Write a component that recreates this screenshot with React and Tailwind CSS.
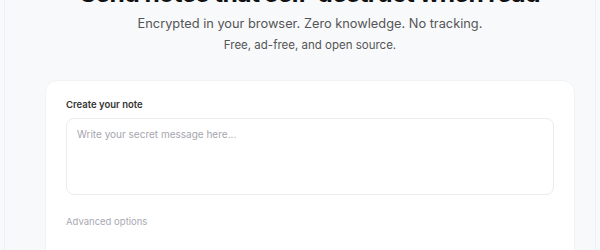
import React from 'react';

const App = () => {
  return (
    <div className="min-h-screen bg-[#f8f9fb] font-['Inter',sans-serif] overflow-hidden">
      <div className="mx-[4px] min-h-[250px] border-x border-[#eef0f7]">
        <div className="ml-[40px] w-[530px]">
          {/* heading, scrolled mostly out of view */}
          <div className="flex flex-col items-center -mt-[21px]">
            <h1 className="text-[24.6px] font-bold leading-[29px] tracking-tight text-[#111] whitespace-nowrap">
              Send notes that self-destruct when read
            </h1>
            <p className="mt-[6px] text-[12.8px] leading-[20px] text-[#555]">
              Encrypted in your browser. Zero knowledge. No tracking.
            </p>
            <p className="mt-[2px] text-[11.5px] leading-[18px] text-[#555]">
              Free, ad-free, and open source.
            </p>
          </div>

          <div className="mt-[26px] bg-white rounded-xl border border-[#f1f2f5] px-5 pt-[17px] pb-8">
            <label className="block text-[9.5px] font-semibold text-[#333] leading-[14px]">
              Create your note
            </label>
            <textarea
              className="mt-[6px] block w-full h-[77px] resize-none rounded-lg border border-[#ececf0] px-[10px] py-[7px] text-[10px] leading-[16px] text-[#333] placeholder:text-[#a6a6ae] focus:outline-none"
              placeholder="Write your secret message here..."
            />
            <div className="mt-[20px] text-[9.5px] leading-[14px] text-[#a9a9b4]">
              Advanced options
            </div>
          </div>
        </div>
      </div>
    </div>
  );
};

export default App;
